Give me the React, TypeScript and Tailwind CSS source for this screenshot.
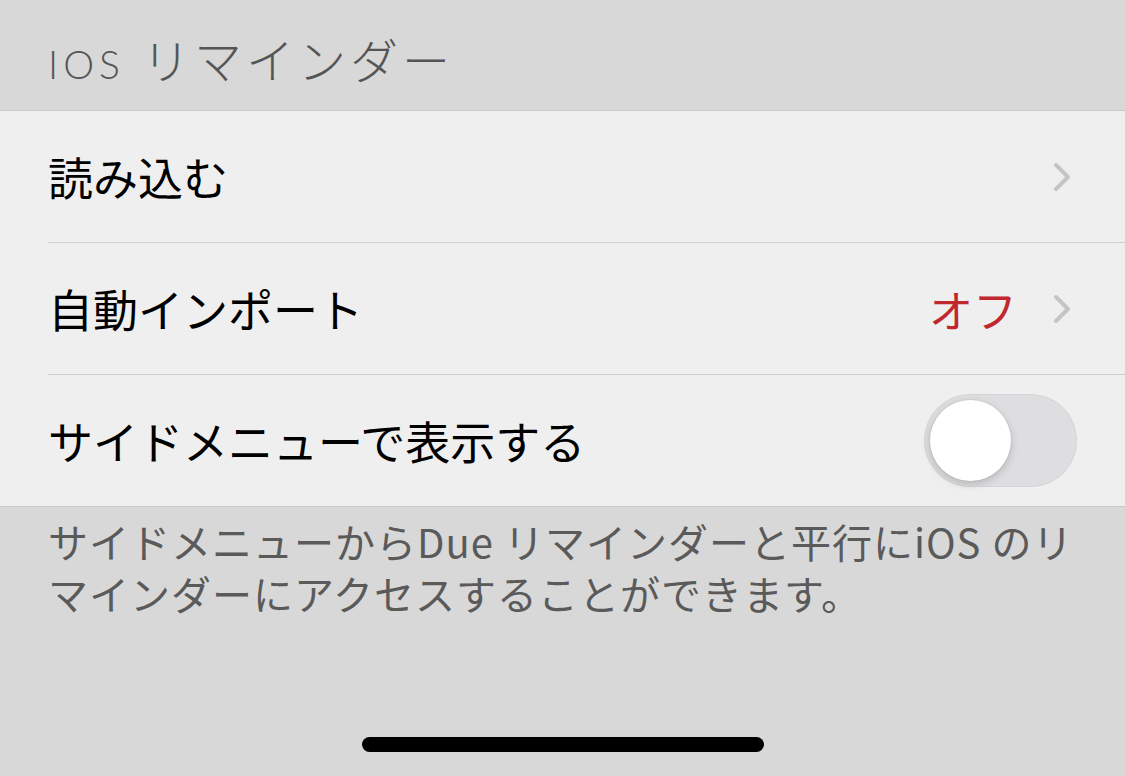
import React from "react";

const font = { fontFamily: '"Noto Sans CJK JP", "Noto Sans", sans-serif' };

function Chevron() {
  return (
    <svg width="22" height="30" viewBox="0 0 22 30" className="shrink-0">
      <path d="M5 3 L17 15 L5 27" fill="none" stroke="#c4c4c7" strokeWidth="4" strokeLinecap="round" strokeLinejoin="round" />
    </svg>
  );
}

export default function App() {
  return (
    <div className="w-[1125px] h-[776px] bg-[#d8d8d8] flex flex-col overflow-hidden" style={font}>
      <div className="h-[110px] flex items-end pl-[48px] pb-[25px] text-[#555555]">
        <span className="text-[48px] leading-none tracking-[4px] font-light" style={{ fontFamily: 'Lato, "Noto Sans CJK JP", sans-serif' }}>
          <span className="text-[39px] tracking-[5px]">IOS</span> リマインダー
        </span>
      </div>
      <div className="bg-[#efefef] border-y border-[#c8c8cb]">
        <div className="h-[131px] flex items-center pl-[48px] pr-[52px]">
          <span className="flex-1 text-[45px] text-black leading-none">読み込む</span>
          <Chevron />
        </div>
        <div className="ml-[48px] h-px bg-[#cfcfd2]" />
        <div className="h-[131px] flex items-center pl-[48px] pr-[52px]">
          <span className="flex-1 text-[45px] text-black leading-none">自動インポート</span>
          <span className="text-[44px] text-[#c0282d] leading-none mr-[34px]">オフ</span>
          <Chevron />
        </div>
        <div className="ml-[48px] h-px bg-[#cfcfd2]" />
        <div className="h-[131px] flex items-center pl-[48px] pr-[48px]">
          <span className="flex-1 text-[45px] text-black leading-none">サイドメニューで表示する</span>
          <div className="w-[153px] h-[93px] rounded-full bg-[#dedee0] relative shadow-[inset_0_0_0_1px_rgba(0,0,0,0.04)]">
            <div className="absolute left-[6px] top-[6px] w-[81px] h-[81px] rounded-full bg-white shadow-[0_3px_8px_rgba(0,0,0,0.18),0_0_0_1px_rgba(0,0,0,0.04)]" />
          </div>
        </div>
      </div>
      <div className="pl-[48px] pr-[10px] pt-[8px] text-[40px] leading-[52px] tracking-[1px] text-[#5a5a5a]">
        <div className="whitespace-nowrap">サイドメニューからDue リマインダーと平行にiOS のリ</div>
        <div className="whitespace-nowrap">マインダーにアクセスすることができます。</div>
      </div>
      <div className="flex-1" />
      <div className="flex justify-center pb-[24px]">
        <div className="w-[402px] h-[15px] rounded-full bg-black" />
      </div>
    </div>
  );
}
